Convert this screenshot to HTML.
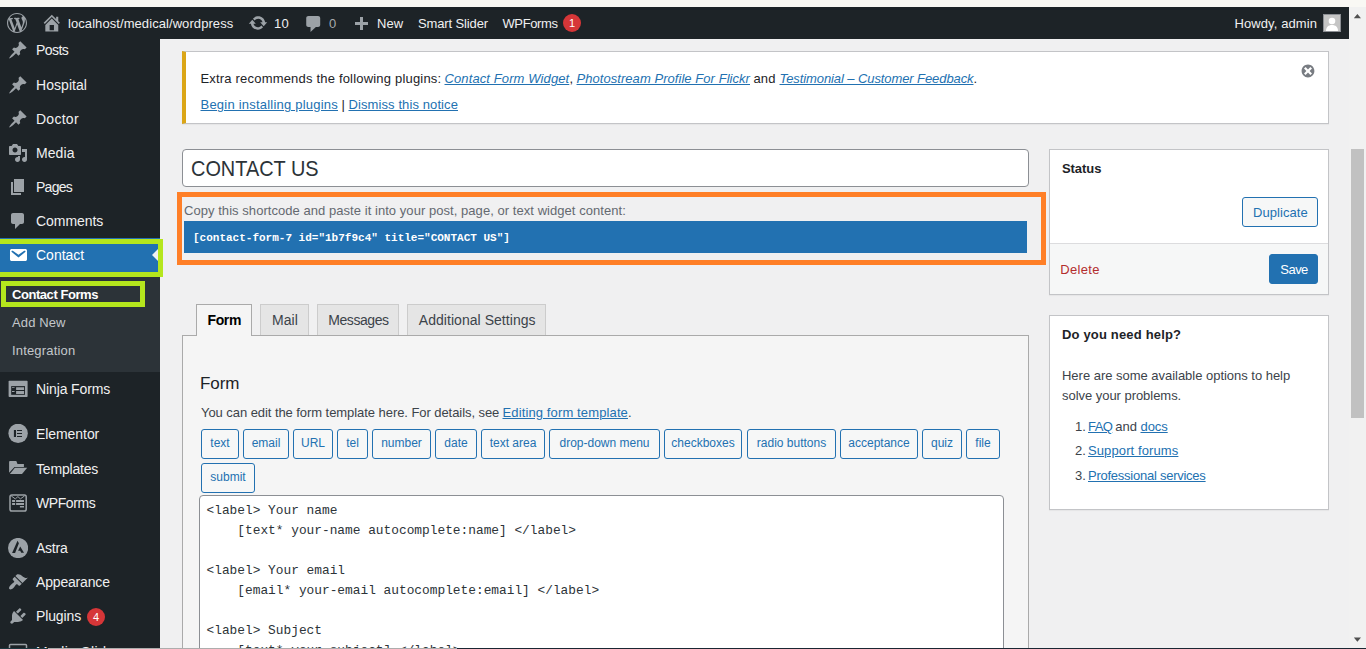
<!DOCTYPE html>
<html lang="en">
<head>
<meta charset="utf-8">
<title>Edit Contact Form</title>
<style>
*{box-sizing:border-box}
html,body{margin:0;padding:0}
body{width:1366px;height:649px;overflow:hidden;position:relative;background:#f0f0f1;font-family:"Liberation Sans",sans-serif;font-size:13px;color:#3c434a;line-height:1.4}
a{color:#2271b1;text-decoration:underline}
.abs{position:absolute}
.t{position:absolute;white-space:nowrap;line-height:1}
/* top strip + admin bar */
#topstrip{left:0;top:0;width:1366px;height:7px;background:#f9f8f4}
#adminbar{left:0;top:7px;width:1349px;height:32px;background:#1d2327;color:#f0f0f1}
#adminbar .t{font-size:13px;color:#f0f0f1;top:10px}
#adminbar svg{position:absolute;fill:#9ca2a7}
.bubble{position:absolute;border-radius:50%;background:#d63638;color:#fff;text-align:center}
/* sidebar */
#menu{left:0;top:39px;width:160px;height:610px;background:#1d2327;overflow:hidden}
#menu .mi{position:absolute;left:36px;font-size:14px;color:#f0f0f1;white-space:nowrap;line-height:1}
#menu svg{position:absolute;fill:#9ca2a7}
#menu .sub{position:absolute;left:12px;font-size:13px;color:#c3c7cb;white-space:nowrap;line-height:1}
/* scrollbar */
#sbar{left:1349px;top:7px;width:17px;height:642px;background:#f1f1f1}
#sthumb{left:1351px;top:149px;width:13px;height:269px;background:#c1c1c1}
/* content */
.box{position:absolute;background:#fff;border:1px solid #c3c4c7;box-shadow:0 1px 1px rgba(0,0,0,.04)}
.btn{position:absolute;border:1px solid #2271b1;border-radius:3px;background:#f6f7f7;color:#2271b1;font-size:13px;text-align:center;white-space:nowrap}
.tag{position:absolute;height:30px;border:1px solid #2271b1;border-radius:3px;background:#f6f7f7;color:#2271b1;font-size:12px;line-height:27px;text-align:center;white-space:nowrap;top:0}
.tab{position:absolute;top:304px;height:33px;border:1px solid #ccc;border-bottom:none;background:#e5e5e5;color:#3c434a;font-size:14px;line-height:31px;text-align:center;white-space:nowrap}
pre{margin:0;font-family:"Liberation Mono",monospace}
</style>
</head>
<body>
<div id="topstrip" class="abs"></div>
<div id="adminbar" class="abs">
<svg viewBox="0 0 20 20" width="20" height="20" style="left:7px;top:6px;"><path d="M20 10c0-5.510-4.490-10-10-10C4.480 0 0 4.490 0 10c0 5.520 4.480 10 10 10c5.510 0 10-4.480 10-10zM7.780 15.370L4.370 6.220c.550-.020 1.170-.080 1.170-.080c.500-.060.440-1.130-.060-1.110c0 0-1.450.110-2.370.110c-.180 0-.370 0-.580-.010C4.120 2.690 6.870 1.110 10 1.110c2.330 0 4.450.870 6.050 2.340c-.680-.110-1.650.390-1.650 1.580c0 .740.450 1.360.900 2.100c.350.610.550 1.360.550 2.460c0 1.490-1.400 5-1.400 5l-3.030-8.370c.540-.020.820-.170.820-.170c.500-.050.440-1.250-.060-1.220c0 0-1.440.120-2.380.120c-.870 0-2.330-.120-2.330-.120c-.500-.030-.560 1.200-.060 1.220l.920.080l1.260 3.410zM17.410 10c.240-.640.740-1.870.430-4.250c.700 1.290 1.050 2.710 1.050 4.250c0 3.290-1.730 6.240-4.400 7.780c.970-2.590 1.940-5.200 2.920-7.780zM6.100 18.090C3.120 16.650 1.110 13.530 1.110 10c0-1.300.230-2.480.720-3.590C3.250 10.300 4.670 14.200 6.100 18.090zm4.030-6.630l2.580 6.980c-.860.290-1.760.450-2.710.450c-.790 0-1.570-.110-2.290-.330c.810-2.380 1.620-4.740 2.420-7.100z"/></svg>
<svg viewBox="0 0 20 20" width="21.6" height="21.6" style="left:41.2px;top:4.7px;"><path d="M16 8.500l1.530 1.530l-1.060 1.060L10 4.620l-6.470 6.470l-1.060-1.060L10 2.500l4 4v-2h2v4zm-6-2.460l6 5.990V18H4v-5.970zM12 17v-5H8v5h4z"/></svg>
<svg viewBox="0 0 20 20" width="20" height="20" style="left:248px;top:6px;"><path d="M10.200 3.280c3.530 0 6.430 2.610 6.920 6h2.080l-3.500 4l-3.500-4h2.320c-.450-1.970-2.210-3.450-4.320-3.450c-1.450 0-2.730.710-3.540 1.780L4.950 5.660C6.230 4.200 8.110 3.280 10.200 3.280zm-.400 13.440c-3.520 0-6.430-2.610-6.920-6H.800l3.500-4c1.170 1.330 2.330 2.670 3.500 4H5.480c.450 1.970 2.210 3.450 4.320 3.450c1.450 0 2.730-.710 3.540-1.780l1.710 1.950c-1.280 1.460-3.150 2.380-5.250 2.380z"/></svg>
<svg viewBox="0 0 20 20" preserveAspectRatio="none" width="21.500" height="20" style="left:302.800px;top:7px"><path d="M5 2h9c1.1 0 2 .9 2 2v7c0 1.1-.9 2-2 2h-2l-5 5v-5H5c-1.1 0-2-.9-2-2V4c0-1.1.9-2 2-2z"/></svg>
<svg viewBox="0 0 20 20" width="20" height="20" style="left:351px;top:8px;"><path d="M17 7v3h-5v5H9v-5H4V7h5V2h3v5h5z"/></svg>
<span class="t" style="left:68px;top:10.2px;font-size:13px;letter-spacing:0.074px;">localhost/medical/wordpress</span>
<span class="t" style="left:274px;top:10.2px;font-size:13px;letter-spacing:0.266px;">10</span>
<span class="t" style="left:329px;top:10.2px;font-size:13px;color:#a7aaad">0</span>
<span class="t" style="left:377px;top:10.2px;font-size:13px;letter-spacing:0.095px;">New</span>
<span class="t" style="left:418px;top:10.2px;font-size:13px;letter-spacing:-0.128px;">Smart Slider</span>
<span class="t" style="left:502.5px;top:10.2px;font-size:13px;letter-spacing:-0.397px;">WPForms</span>
<span class="bubble" style="left:563px;top:7px;width:18px;height:18px;font-size:11px;line-height:18px">1</span>
<span class="t" style="left:1234.5px;top:10.2px;font-size:13px;letter-spacing:0.091px;">Howdy, admin</span>
<div class="abs" style="left:1323px;top:7px;width:18px;height:18px;background:#c5c5c5;border:1px solid #8c8f94;overflow:hidden"><svg viewBox="0 0 16 16" width="16" height="16" style="left:0;top:0;fill:#fff"><circle cx="8" cy="6" r="3.300"/><path d="M2 16c0-4 2.500-6 6-6s6 2 6 6z"/></svg></div>
</div>
<div id="menu" class="abs">
<div class="abs" style="left:0;top:199px;width:160px;height:34px;background:#2271b1"></div>
<div class="abs" style="left:0;top:233px;width:160px;height:100px;background:#2c3338"></div>
<div class="abs" style="left:152px;top:208px;width:0;height:0;border:8px solid transparent;border-right-color:#f0f0f1;border-left-width:0"></div>
<svg viewBox="0 0 20 20" width="20" height="20" style="left:8px;top:1px"><path d="M10.44 3.02l1.82-1.82 6.36 6.35-1.83 1.82c-1.05-.68-2.48-.57-3.41.36l-.75.75c-.92.93-1.04 2.35-.35 3.41l-1.83 1.82-2.41-2.41-2.8 2.79c-.42.42-3.38 2.71-3.8 2.29s1.86-3.39 2.28-3.81l2.79-2.79L4.1 9.36l1.83-1.82c1.05.69 2.48.57 3.4-.36l.75-.75c.93-.92 1.05-2.35.36-3.41z"/></svg>
<span class="mi" style="left:36px;top:3.8px;font-size:14px;letter-spacing:-0.543px;">Posts</span>
<svg viewBox="0 0 20 20" width="20" height="20" style="left:8px;top:36px"><path d="M10.44 3.02l1.82-1.82 6.36 6.35-1.83 1.82c-1.05-.68-2.48-.57-3.41.36l-.75.75c-.92.93-1.04 2.35-.35 3.41l-1.83 1.82-2.41-2.41-2.8 2.79c-.42.42-3.38 2.71-3.8 2.29s1.86-3.39 2.28-3.81l2.79-2.79L4.1 9.36l1.83-1.82c1.05.69 2.48.57 3.4-.36l.75-.75c.93-.92 1.05-2.35.36-3.41z"/></svg>
<span class="mi" style="left:36px;top:38.8px;font-size:14px;letter-spacing:0.051px;">Hospital</span>
<svg viewBox="0 0 20 20" width="20" height="20" style="left:8px;top:70px"><path d="M10.44 3.02l1.82-1.82 6.36 6.35-1.83 1.82c-1.05-.68-2.48-.57-3.41.36l-.75.75c-.92.93-1.04 2.35-.35 3.41l-1.83 1.82-2.41-2.41-2.8 2.79c-.42.42-3.38 2.71-3.8 2.29s1.86-3.39 2.28-3.81l2.79-2.79L4.1 9.36l1.83-1.82c1.05.69 2.48.57 3.4-.36l.75-.75c.93-.92 1.05-2.35.36-3.41z"/></svg>
<span class="mi" style="left:36px;top:72.8px;font-size:14px;letter-spacing:0.261px;">Doctor</span>
<svg viewBox="0 0 20 20" width="20" height="20" style="left:8px;top:104px"><path d="M13 11V4c0-.55-.45-1-1-1h-1.67L9 1H5L3.67 3H2c-.55 0-1 .45-1 1v7c0 .55.45 1 1 1h10c.55 0 1-.45 1-1zM7 4.5c1.38 0 2.5 1.12 2.5 2.5S8.38 9.5 7 9.5 4.5 8.38 4.5 7 5.62 4.5 7 4.5zM14 6h5v10.5c0 1.38-1.12 2.5-2.5 2.5S14 17.88 14 16.5s1.12-2.5 2.5-2.5c.17 0 .34.02.5.05V9h-3V6zm-4 8.05V13h2v3.5c0 1.38-1.12 2.5-2.5 2.5S7 17.88 7 16.5 8.12 14 9.5 14c.17 0 .34.02.5.05z"/></svg>
<span class="mi" style="left:36px;top:106.8px;font-size:14px;letter-spacing:0.072px;">Media</span>
<svg viewBox="0 0 20 20" width="20" height="20" style="left:8px;top:138px"><path d="M6 15V2h10v13H6zm-1 1h8v2H3V5h2v11z"/></svg>
<span class="mi" style="left:36px;top:140.8px;font-size:14px;letter-spacing:-0.741px;">Pages</span>
<svg viewBox="0 0 20 20" width="20" height="20" style="left:8px;top:172px"><path d="M5 2h9c1.1 0 2 .9 2 2v7c0 1.1-.9 2-2 2h-2l-5 5v-5H5c-1.1 0-2-.9-2-2V4c0-1.1.9-2 2-2z"/></svg>
<span class="mi" style="left:36px;top:174.8px;font-size:14px;letter-spacing:-0.061px;">Comments</span>
<svg viewBox="0 0 20 20" width="20" height="20" style="fill:#fff;left:8px;top:206px"><path d="M3.87 4h13.25C18.37 4 19 4.59 19 5.79v8.42c0 1.19-.63 1.79-1.88 1.79H3.870c-1.25 0-1.88-.6-1.88-1.79V5.79c0-1.2.63-1.79 1.88-1.79zm6.62 8.6l6.74-5.53c.24-.2.43-.66.13-1.07-.29-.41-.82-.42-1.17-.17l-5.7 3.860L4.800 5.830c-.35-.25-.88-.24-1.17.17-.3.41-.11.87.13 1.070z"/></svg>
<span class="mi" style="left:36px;top:208.8px;font-size:14px;letter-spacing:-0.007px;color:#fff">Contact</span>
<svg viewBox="0 0 20 20" width="20" height="20" style="left:8px;top:340px"><rect x="0.600" y="1.800" width="19" height="16.200" rx="0.800"/><rect x="3.200" y="7.100" width="13.800" height="8.700" fill="#1d2327"/><path d="M8.100 8.200h8v2.800h-8z M8.100 12.100h8v2.800h-8z M4 8.200h2.600v.800H4z M4 12.100h2.600v.800H4z"/></svg>
<span class="mi" style="left:36px;top:342.8px;font-size:14px;letter-spacing:-0.115px;">Ninja Forms</span>
<svg viewBox="0 0 20 20" width="20" height="20" style="left:8px;top:385px"><circle cx="10.100" cy="9.400" r="9.700"/><path fill="#1d2327" d="M5.900 6h2.100v7H5.900z M9 6h5v1H9z M9 9h5v1H9z M9 12h5v1H9z"/></svg>
<span class="mi" style="left:36px;top:387.8px;font-size:14px;letter-spacing:-0.068px;">Elementor</span>
<svg viewBox="0 0 20 20" width="20" height="20" style="left:8px;top:420px"><path d="M2 1.900h6.300l1.200 3h6.400V8H6.500L1.100 13.800V2.800c0-.5.400-.9.900-.9z"/><path d="M6.900 8.700h12.300l-5.200 6.200H1.900z"/></svg>
<span class="mi" style="left:36px;top:422.8px;font-size:14px;letter-spacing:-0.179px;">Templates</span>
<svg viewBox="0 0 20 20" width="20" height="20" style="left:8px;top:454px"><rect x="2" y="1.900" width="16.200" height="16.200" rx="1.800" fill="none" stroke="#9ca2a7" stroke-width="1.500"/><path d="M3.200 2.900l4.100 3 2.600-2.300 2.500 2.300 4.200-3" fill="none" stroke="#9ca2a7" stroke-width="1"/><path d="M4.100 7h3v1.900h-3z M8.100 7H16v1.900H8.100z M4.100 10h3v1.900h-3z M8.100 10H16v1.900H8.100z M11.900 13H16v1.600h-4.100z"/></svg>
<span class="mi" style="left:36px;top:456.8px;font-size:14px;letter-spacing:-0.417px;">WPForms</span>
<svg viewBox="0 0 20 20" width="20" height="20" style="left:8px;top:499px"><circle cx="10.100" cy="10" r="10.100"/><path fill="#1d2327" d="M9.500 2.800L10.900 5.200 7.100 14.900H4.100z M12.200 8.400L16 14.700H13.200L12.200 12.800H10.100z"/></svg>
<span class="mi" style="left:36px;top:501.8px;font-size:14px;letter-spacing:-0.237px;">Astra</span>
<svg viewBox="0 0 20 20" width="20" height="20" style="left:8px;top:533px"><path d="M14.480 11.060L7.410 3.990l1.500-1.500c.5-.56 2.300-.47 3.510.32 1.210.8 1.430 1.280 2.910 2.100 1.180.64 2.450 1.260 4.450.85zm-.71.71L6.700 4.700 4.930 6.470c-.39.39-.39 1.020 0 1.410l1.060 1.060c.39.39.39 1.030 0 1.420-.6.6-1.430 1.110-2.210 1.690-.35.26-.7.53-1.010.84C1.430 14.230.4 16.080 1.400 17.070c.99 1 2.840-.03 4.180-1.360.31-.31.58-.66.85-1.020.57-.78 1.080-1.610 1.690-2.210.39-.39 1.020-.39 1.410 0l1.060 1.060c.39.39 1.020.39 1.410 0z"/></svg>
<span class="mi" style="left:36px;top:535.8px;font-size:14px;letter-spacing:-0.172px;">Appearance</span>
<svg viewBox="0 0 20 20" width="20" height="20" style="left:8px;top:567px"><path d="M13.110 4.360L9.870 7.600 8 5.730l3.240-3.240c.35-.34 1.050-.2 1.560.32.52.51.66 1.210.31 1.550zm-8 1.770l.91-1.120 9.010 9.010-1.190.84c-.71.71-2.630 1.160-3.820 1.160H6.140L4.900 17.260c-.59.59-1.540.59-2.120 0-.59-.58-.59-1.530 0-2.120L4 13.900V10c0-1.190.4-3.160 1.110-3.870zm7.260 3.970l3.240-3.240c.34-.35 1.040-.21 1.550.31.520.51.66 1.210.31 1.550l-3.240 3.250z"/></svg>
<span class="mi" style="left:36px;top:569.8px;font-size:14px;letter-spacing:-0.132px;">Plugins</span>
<svg viewBox="0 0 20 20" width="20" height="20" style="left:8px;top:603px"><rect x="1.500" y="2.500" width="17" height="16" rx="1" fill="none" stroke="#9ca2a7" stroke-width="1.500"/><circle cx="13.500" cy="8.500" r="1.500"/><path d="M4 14l4-5 3 3 2-2 3 4z"/></svg>
<span class="mi" style="left:36px;top:605.8px;font-size:14px;letter-spacing:0.514px;">Media Slider</span>
<span class="sub" style="left:12px;top:248.8px;font-size:13px;letter-spacing:-0.441px;color:#fff;font-weight:bold">Contact Forms</span>
<span class="sub" style="left:12px;top:276.8px;font-size:13px;letter-spacing:0.121px;">Add New</span>
<span class="sub" style="left:12px;top:304.8px;font-size:13px;letter-spacing:0.169px;">Integration</span>
<span class="bubble" style="left:87px;top:569px;width:18px;height:18px;font-size:11px;line-height:18px">4</span>
</div>
<div class="abs" style="left:-6px;top:239px;width:169px;height:38px;border:5px solid #b5e61d"></div>
<div class="abs" style="left:1px;top:281px;width:144px;height:26px;border:5px solid #b5e61d"></div>
<div id="sbar" class="abs"></div><div id="sthumb" class="abs"></div>
<svg class="abs" width="17" height="642" viewBox="0 0 17 642" style="left:1349px;top:7px"><path fill="#505050" d="M4.800 11.200L8.400 7l3.600 4.200z M4.800 630.500L8.400 634.700l3.600-4.200z"/></svg>
<div id="content">
<div class="box" style="left:182px;top:51px;width:1147px;height:73px;border-left:4px solid #dba617"></div>
<span class="t" style="left:200.5px;top:72.0px;font-size:13px;letter-spacing:0.190px;color:#1d2327">Extra recommends the following plugins:</span>
<span class="t" style="left:444.5px;top:72.0px;font-size:13px;letter-spacing:0.110px;font-style:italic;"><a>Contact Form Widget</a></span>
<span class="t" style="left:569.5px;top:72.0px;font-size:13px;color:#1d2327">,</span>
<span class="t" style="left:576.5px;top:72.0px;font-size:13px;letter-spacing:0.052px;font-style:italic;"><a>Photostream Profile For Flickr</a></span>
<span class="t" style="left:753.5px;top:72.0px;font-size:13px;letter-spacing:0.099px;color:#1d2327">and</span>
<span class="t" style="left:779.5px;top:72.0px;font-size:13px;letter-spacing:-0.090px;font-style:italic;"><a>Testimonial – Customer Feedback</a></span>
<span class="t" style="left:973.5px;top:72.0px;font-size:13px;color:#1d2327">.</span>
<span class="t" style="left:200.5px;top:98.0px;font-size:13px;letter-spacing:0.218px;"><a>Begin installing plugins</a></span>
<span class="t" style="left:341.5px;top:98.0px;font-size:13px;color:#1d2327">|</span>
<span class="t" style="left:348.5px;top:98.0px;font-size:13px;letter-spacing:0.098px;"><a>Dismiss this notice</a></span>
<svg viewBox="0 0 20 20" width="16" height="16" style="left:1300px;top:63.3px;position:absolute;fill:#787c82"><path d="M10 2c4.420 0 8 3.580 8 8s-3.580 8-8 8-8-3.580-8-8 3.580-8 8-8zm5 11l-3-3 3-3-2-2-3 3-3-3-2 2 3 3-3 3 2 2 3-3 3 3z"/></svg>
<div class="abs" style="left:182px;top:149px;width:847px;height:38px;background:#fff;border:1px solid #8c8f94;border-radius:4px"></div>
<span class="t" style="left:191px;top:158.4px;font-size:22px;color:#2c3338;transform-origin:0 0;transform:scaleX(0.905)">CONTACT US</span>
<div class="abs" style="left:177px;top:192px;width:869px;height:73px;border:5px solid #ff7f27"></div>
<span class="t" style="left:184px;top:203.8px;font-size:13px;letter-spacing:0.050px;color:#646970">Copy this shortcode and paste it into your post, page, or text widget content:</span>
<div class="abs" style="left:184px;top:221px;width:843px;height:32px;background:#2271b1"></div>
<span class="t" style="left:193px;top:232.5px;font-size:11px;color:#fff;font-weight:bold;font-family:'Liberation Mono',monospace">[contact-form-7 id="1b7f9c4" title="CONTACT US"]</span>
<div class="abs" style="left:182px;top:335px;width:847px;height:330px;background:#f5f5f5;border:1px solid #aaa"></div>
<div class="tab" style="left:196px;width:56px;background:#f5f5f5;height:32px;border-color:#aaa"></div>
<span class="t" style="left:207.5px;top:313.1px;font-size:14px;letter-spacing:-0.375px;color:#000;font-weight:bold">Form</span>
<div class="tab" style="left:260px;width:49px;height:31px"></div>
<span class="t" style="left:272px;top:313.1px;font-size:14px;letter-spacing:0.032px;color:#3c434a">Mail</span>
<div class="tab" style="left:317px;width:82px;height:31px"></div>
<span class="t" style="left:328.3px;top:313.1px;font-size:14px;letter-spacing:-0.439px;color:#3c434a">Messages</span>
<div class="tab" style="left:407px;width:139px;height:31px"></div>
<span class="t" style="left:418.8px;top:313.1px;font-size:14px;letter-spacing:0.044px;color:#3c434a">Additional Settings</span>
<span class="t" style="left:200px;top:374.8px;font-size:17px;letter-spacing:-0.043px;color:#1d2327">Form</span>
<span class="t" style="left:201px;top:405.8px;font-size:13px;letter-spacing:-0.062px;">You can edit the form template here. For details, see</span>
<span class="t" style="left:502.5px;top:405.8px;font-size:13px;letter-spacing:0.126px;"><a>Editing form template</a></span>
<span class="t" style="left:628px;top:405.8px;font-size:13px;">.</span>
<div class="tag" style="left:201px;top:429px;width:38px">text</div>
<div class="tag" style="left:243px;top:429px;width:46px">email</div>
<div class="tag" style="left:293px;top:429px;width:40px">URL</div>
<div class="tag" style="left:337px;top:429px;width:31px">tel</div>
<div class="tag" style="left:372px;top:429px;width:59px">number</div>
<div class="tag" style="left:435px;top:429px;width:42px">date</div>
<div class="tag" style="left:481px;top:429px;width:64px">text area</div>
<div class="tag" style="left:549px;top:429px;width:111px">drop-down menu</div>
<div class="tag" style="left:664px;top:429px;width:78px">checkboxes</div>
<div class="tag" style="left:747px;top:429px;width:89px">radio buttons</div>
<div class="tag" style="left:840px;top:429px;width:78px">acceptance</div>
<div class="tag" style="left:922px;top:429px;width:40px">quiz</div>
<div class="tag" style="left:966px;top:429px;width:34px">file</div>
<div class="tag" style="left:201px;top:463px;width:54px">submit</div>
<div class="abs" style="left:199px;top:495px;width:805px;height:171px;background:#fff;border:1px solid #8c8f94;border-radius:4px"></div>
<pre class="abs" style="left:206.500px;top:501px;font-size:12.830px;line-height:20px;color:#2c3338">&lt;label&gt; Your name
    [text* your-name autocomplete:name] &lt;/label&gt;

&lt;label&gt; Your email
    [email* your-email autocomplete:email] &lt;/label&gt;

&lt;label&gt; Subject
    [text* your-subject] &lt;/label&gt;</pre>
<div class="box" style="left:1049px;top:149px;width:280px;height:146px"></div>
<div class="abs" style="left:1050px;top:243px;width:278px;height:51px;background:#f6f7f7;border-top:1px solid #dcdcde"></div>
<span class="t" style="left:1062px;top:162.2px;font-size:13px;letter-spacing:-0.072px;color:#1d2327;font-weight:bold">Status</span>
<div class="btn" style="left:1242px;top:197px;width:76px;height:30px"></div>
<span class="t" style="left:1253px;top:205.7px;font-size:13px;letter-spacing:0.066px;color:#2271b1">Duplicate</span>
<div class="btn" style="left:1269px;top:254px;width:49px;height:30px;background:#2271b1"></div>
<span class="t" style="left:1280.3px;top:263.0px;font-size:13px;letter-spacing:-0.535px;color:#fff">Save</span>
<span class="t" style="left:1060.3px;top:263.0px;font-size:13px;letter-spacing:0.304px;color:#b32d2e">Delete</span>
<div class="box" style="left:1049px;top:315px;width:280px;height:195px"></div>
<span class="t" style="left:1062px;top:328.2px;font-size:13px;letter-spacing:0.171px;color:#1d2327;font-weight:bold">Do you need help?</span>
<span class="t" style="left:1062px;top:369.2px;font-size:13px;letter-spacing:-0.023px;">Here are some available options to help</span>
<span class="t" style="left:1062px;top:388.6px;font-size:13px;letter-spacing:-0.038px;">solve your problems.</span>
<span class="t" style="left:1075px;top:420.0px;font-size:13px;">1.</span>
<span class="t" style="left:1088px;top:420.0px;font-size:13px;letter-spacing:-0.572px;"><a>FAQ</a></span>
<span class="t" style="left:1115.2px;top:420.0px;font-size:13px;letter-spacing:0.032px;">and</span>
<span class="t" style="left:1140.5px;top:420.0px;font-size:13px;letter-spacing:-0.067px;"><a>docs</a></span>
<span class="t" style="left:1075px;top:444.4px;font-size:13px;">2.</span>
<span class="t" style="left:1088px;top:444.4px;font-size:13px;letter-spacing:0.109px;"><a>Support forums</a></span>
<span class="t" style="left:1075px;top:469.0px;font-size:13px;">3.</span>
<span class="t" style="left:1088px;top:469.0px;font-size:13px;letter-spacing:-0.249px;"><a>Professional services</a></span>
</div>
<div class="abs" style="left:0;top:648px;width:48px;height:1px;background:#1e3840"></div><div class="abs" style="left:48px;top:648px;width:409px;height:1px;background:#adadad"></div><div class="abs" style="left:457px;top:648px;width:909px;height:1px;background:#1a2733"></div>
</body>
</html>
